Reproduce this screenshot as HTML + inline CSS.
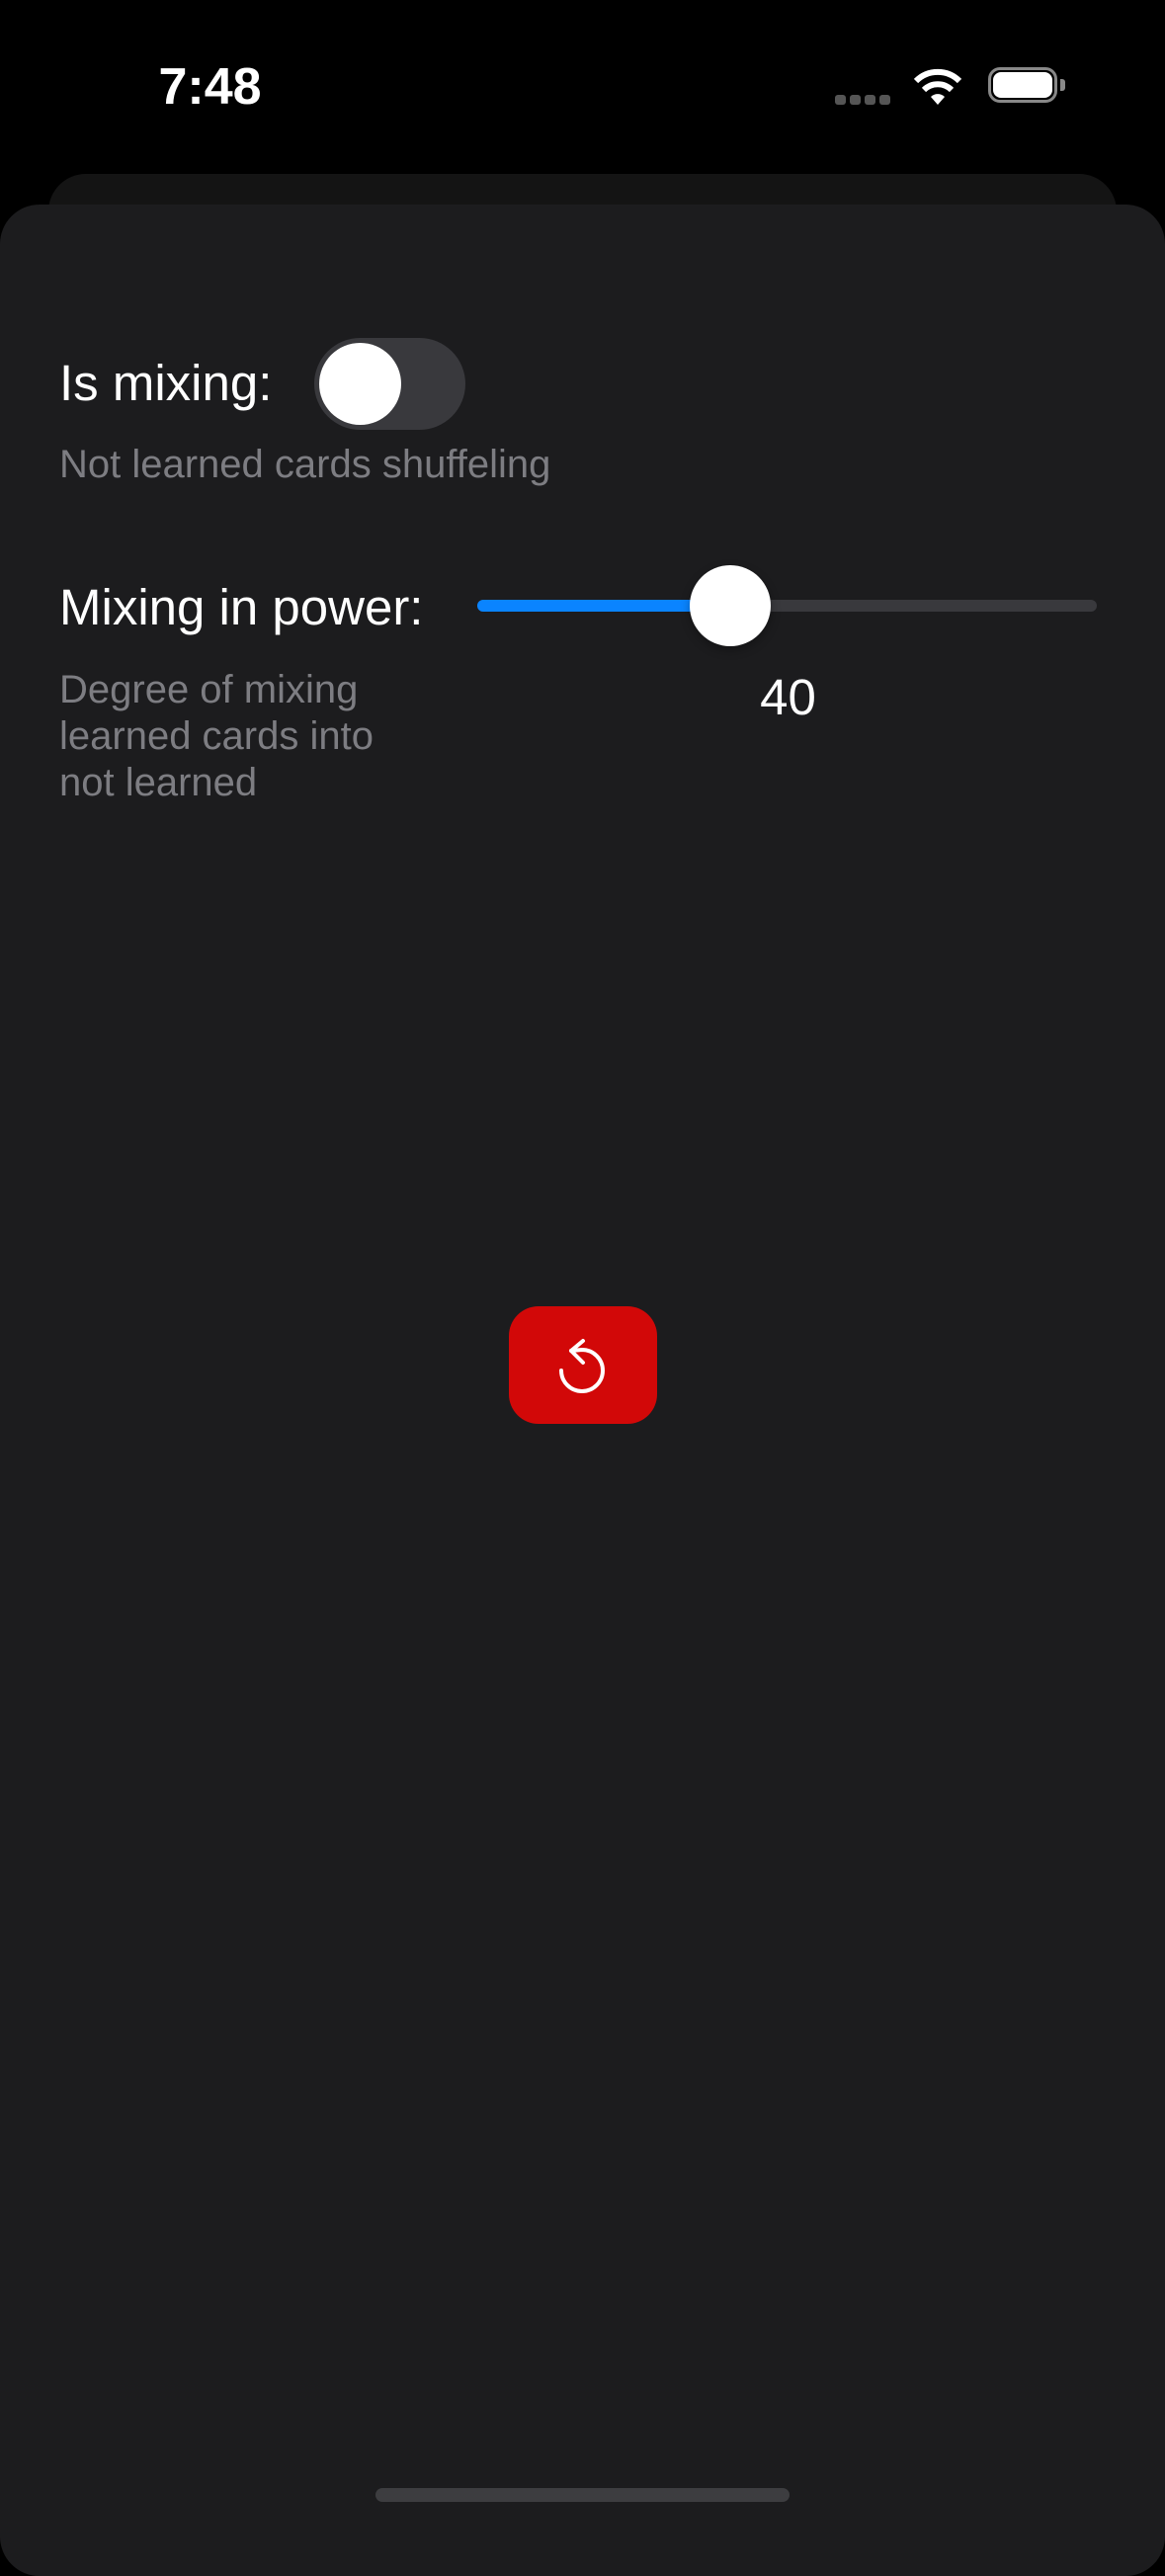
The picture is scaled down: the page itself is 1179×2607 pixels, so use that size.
<!DOCTYPE html>
<html><head><meta charset="utf-8"><style>
body{margin:0;width:1179px;height:2556px;background:#000;position:relative;overflow:hidden;font-family:"Liberation Sans",sans-serif;}
.a{position:absolute}
</style></head><body>
<div class="a" style="left:150px;top:58px;font-size:52px;font-weight:bold;color:#fff;width:125px;text-align:center;">7:48</div>
<div class="a" style="left:845px;top:96px;width:58px;height:10px;">
 <div class="a" style="left:0;width:11px;height:10px;border-radius:3px;background:#555"></div>
 <div class="a" style="left:15px;width:11px;height:10px;border-radius:3px;background:#555"></div>
 <div class="a" style="left:30px;width:11px;height:10px;border-radius:3px;background:#555"></div>
 <div class="a" style="left:45px;width:11px;height:10px;border-radius:3px;background:#555"></div>
</div>
<svg class="a" style="left:923px;top:68px" width="52" height="40" viewBox="0 0 52 40">
 <path d="M26 38 L19 30 A10 10 0 0 1 33 30 Z" fill="#fff"/>
 <path d="M12 23 A20 20 0 0 1 40 23" stroke="#fff" stroke-width="6" fill="none"/>
 <path d="M4 14 A31 31 0 0 1 48 14" stroke="#fff" stroke-width="6" fill="none"/>
</svg>
<div class="a" style="left:1000px;top:68px;width:70px;height:36px;border:3px solid #888;border-radius:12px;box-sizing:border-box;"></div>
<div class="a" style="left:1005px;top:73px;width:60px;height:26px;background:#fff;border-radius:8px;"></div>
<div class="a" style="left:1073px;top:80px;width:5px;height:12px;background:#888;border-radius:0 3px 3px 0;"></div>

<div class="a" style="left:49px;top:176px;width:1081px;height:200px;background:#141414;border-radius:38px;"></div>
<div class="a" style="left:0;top:207px;width:1179px;height:2400px;background:#1c1c1e;border-radius:40px;"></div>

<div class="a" style="left:60px;top:358px;font-size:51px;color:#fff;">Is mixing:</div>
<div class="a" style="left:318px;top:342px;width:153px;height:93px;border-radius:47px;background:#39393d;"></div>
<div class="a" style="left:323px;top:347px;width:83px;height:83px;border-radius:50%;background:#fff;"></div>
<div class="a" style="left:60px;top:448px;font-size:40px;color:#7d7d82;">Not learned cards shuffeling</div>

<div class="a" style="left:60px;top:585px;font-size:51px;color:#fff;">Mixing in power:</div>
<div class="a" style="left:483px;top:607px;width:627px;height:12px;border-radius:6px;background:#39393d;"></div>
<div class="a" style="left:483px;top:607px;width:260px;height:12px;border-radius:6px;background:#0a84ff;"></div>
<div class="a" style="left:698px;top:572px;width:82px;height:82px;border-radius:50%;background:#fff;box-shadow:0 4px 10px rgba(0,0,0,.3)"></div>
<div class="a" style="left:740px;top:676px;width:115px;text-align:center;font-size:51px;color:#fff;">40</div>
<div class="a" style="left:60px;top:675px;font-size:40px;line-height:47px;color:#7d7d82;">Degree of mixing<br>learned cards into<br>not learned</div>

<div class="a" style="left:515px;top:1322px;width:150px;height:119px;border-radius:30px;background:#d20808;"></div>
<svg class="a" style="left:560px;top:1350px" width="60" height="65" viewBox="0 0 60 65">
 <path d="M8 37 A21 21 0 1 0 29 16 L18 17" stroke="#fff" stroke-width="4" fill="none" stroke-linecap="round" stroke-linejoin="round"/>
 <path d="M30 7 L18 17 L30 29" stroke="#fff" stroke-width="4" fill="none" stroke-linecap="round" stroke-linejoin="round"/>
</svg>

<div class="a" style="left:380px;top:2518px;width:419px;height:14px;border-radius:7px;background:#3d3d40;"></div>
</body></html>
